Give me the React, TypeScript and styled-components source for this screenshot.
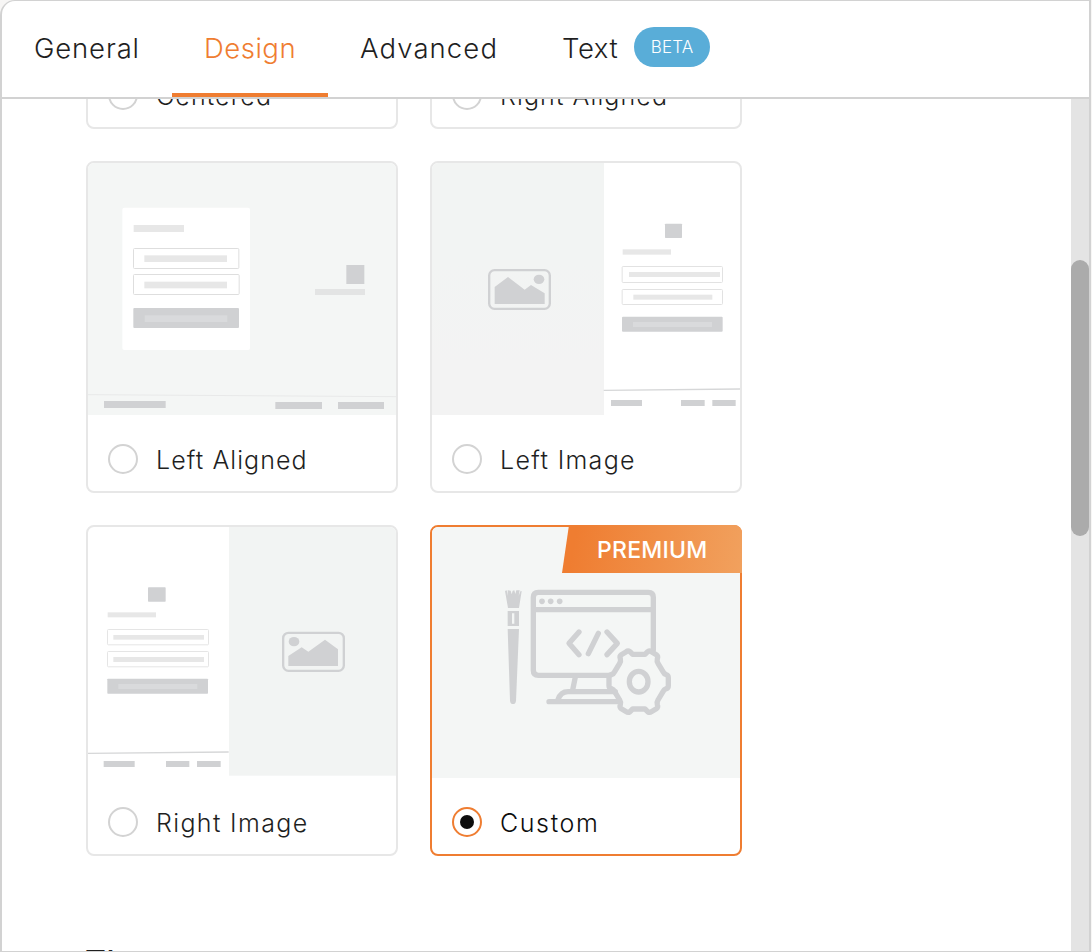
import React from "react";
import styled, { createGlobalStyle } from "styled-components";

const GlobalStyle = createGlobalStyle`
  * { box-sizing: border-box; }
  body { margin: 0; background: #f7f6f5; font-family: Inter, "Liberation Sans", sans-serif; color: #1f1f1f; }
`;

const Panel = styled.main`
  display: flex;
  flex-direction: column;
  width: 1091px;
  height: 952px;
  border: solid #d2d2d2;
  border-width: 1px 2px 1px 2px;
  border-top-left-radius: 15px;
  background: #fff;
  overflow: hidden;
`;

const TabBar = styled.nav`
  display: flex;
  flex: none;
  height: 98px;
  border-bottom: 2px solid #d2d2d2;
`;

const Tab = styled.div<{ $active?: boolean }>`
  display: flex;
  align-items: center;
  gap: 16px;
  padding: 2px 32px 0;
  border-bottom: 4px solid ${(p) => (p.$active ? "#ef7d31" : "transparent")};
  color: ${(p) => (p.$active ? "#ef7d31" : "#1f1f1f")};
`;

const TabLabel = styled.span<{ $width: number; $spacing: number }>`
  width: ${(p) => p.$width}px;
  font-size: 27.5px;
  font-weight: 330;
  line-height: 36px;
  letter-spacing: ${(p) => p.$spacing}px;
  white-space: nowrap;
`;

const Beta = styled.span`
  display: flex;
  align-items: center;
  justify-content: center;
  width: 76px;
  height: 40px;
  margin-top: -3px;
  border-radius: 20px;
  background: #59add8;
  color: #fff;
  font-size: 17px;
  font-weight: 330;
  letter-spacing: 0.1px;
`;

const Body = styled.div`
  display: flex;
  flex: 1;
  min-height: 0;
  overflow: hidden;
`;

const Content = styled.section`
  flex: 1;
  padding-left: 84px;
  overflow: hidden;
`;

const Grid = styled.div`
  display: grid;
  grid-template-columns: 312px 312px;
  grid-template-rows: 332px 332px 331px;
  gap: 32px;
  margin-top: -302px;
`;

const Card = styled.label<{ $selected?: boolean }>`
  position: relative;
  display: flex;
  flex-direction: column;
  border: 2px solid ${(p) => (p.$selected ? "#ef7d31" : "#e7e7e7")};
  border-radius: 8px;
  background: #fff;
  color: ${(p) => (p.$selected ? "#0d0d0d" : "#1f1f1f")};
`;

const Art = styled.svg`
  display: block;
  flex: none;
  width: 308px;
  border-radius: 6px 6px 0 0;
`;

const Choice = styled.div`
  display: flex;
  align-items: center;
  gap: 18px;
  height: 30px;
  margin: auto 20px 17px;
`;

const Radio = styled.span<{ $selected?: boolean }>`
  display: flex;
  align-items: center;
  justify-content: center;
  width: 30px;
  height: 30px;
  border: 2px solid ${(p) => (p.$selected ? "#ef7d31" : "#d3d3d3")};
  border-radius: 50%;

  &::after {
    content: "";
    width: 14px;
    height: 14px;
    border-radius: 50%;
    background: ${(p) => (p.$selected ? "#0d0d0d" : "transparent")};
  }
`;

const Name = styled.span<{ $spacing: number }>`
  padding-top: 2px;
  font-size: 25px;
  font-weight: 330;
  line-height: 30px;
  letter-spacing: ${(p) => p.$spacing}px;
  white-space: nowrap;
`;

const Ribbon = styled.span`
  position: absolute;
  top: -2px;
  right: -2px;
  width: 180px;
  height: 48px;
  padding-left: 35px;
  border-top-right-radius: 8px;
  background: linear-gradient(100deg, #ef7d31 8%, #f1a15e 100%);
  clip-path: polygon(7px 0, 100% 0, 100% 100%, 0 100%);
  color: #fff;
  font-size: 23px;
  font-weight: 450;
  line-height: 50px;
  letter-spacing: 0.25px;
`;

const Heading = styled.h2`
  margin: 87px 0 0 -1px;
  font-size: 32px;
  font-weight: 450;
  line-height: 40px;
  letter-spacing: 0.6px;
`;

const Track = styled.div`
  flex: none;
  width: 18px;
  padding-top: 161px;
  background: #e4e4e4;
`;

const Thumb = styled.div`
  height: 276px;
  border-radius: 9px;
  background: #ababab;
`;

const DARK = "#d0d1d3";
const LIGHT = "#e7e7e7";

const LeftAlignedArt = () => (
  <Art viewBox="24 24 924 756" height={252}>
    <rect x="24" y="24" width="924" height="756" fill="#f4f6f5" />
    <rect x="127" y="158" width="383" height="427" rx="6" fill="#fff" />
    <rect x="161" y="210" width="151" height="21" fill={LIGHT} />
    <g fill="none" stroke="#dedede" strokeWidth="3">
      <rect x="160.500" y="280.500" width="316" height="60" rx="3" />
      <rect x="160.500" y="358.500" width="317" height="60" rx="3" />
    </g>
    <rect x="193" y="301" width="248" height="20" fill={LIGHT} />
    <rect x="193" y="380" width="248" height="20" fill={LIGHT} />
    <rect x="160" y="459" width="317" height="60" rx="3" fill={DARK} />
    <rect x="194" y="481" width="248" height="20" fill="#d9dadc" />
    <rect x="799" y="330" width="54" height="57" fill={DARK} />
    <rect x="705" y="402" width="150" height="18" fill="#e3e4e4" />
    <path d="M24 719L948 725" stroke="#e8e9e9" strokeWidth="3" />
    <g fill={DARK}>
      <rect x="72" y="738" width="185" height="21" />
      <rect x="586" y="741" width="140" height="21" />
      <rect x="774" y="741" width="138" height="21" />
    </g>
  </Art>
);

const LeftImageArt = () => (
  <Art viewBox="21 24 924 756" height={252}>
    <defs>
      <linearGradient id="fade" x1="0" y1="0" x2="0" y2="1">
        <stop offset="0.4" stopColor="#f2f4f3" />
        <stop offset="0.8" stopColor="#f3f3f3" />
      </linearGradient>
    </defs>
    <rect x="21" y="24" width="516" height="756" fill="url(#fade)" />
    <rect x="192.500" y="345.500" width="182" height="116" rx="16" fill="none" stroke={DARK} strokeWidth="7" />
    <path d="M209 396L249 366L299 404L318 390L359 415V447H209Z" fill={DARK} />
    <ellipse cx="342" cy="373" rx="16" ry="14" fill={DARK} />
    <rect x="720" y="206" width="51" height="43" rx="2" fill={DARK} />
    <rect x="593" y="283" width="145" height="16" fill={LIGHT} />
    <g fill="none" stroke="#e2e2e2" strokeWidth="3">
      <rect x="591.500" y="334.500" width="301" height="48" rx="3" />
      <rect x="591.500" y="403.500" width="301" height="45" rx="3" />
    </g>
    <rect x="612" y="351" width="273" height="15" fill={LIGHT} />
    <rect x="625" y="419" width="237" height="15" fill={LIGHT} />
    <rect x="591" y="485" width="302" height="45" rx="3" fill={DARK} />
    <rect x="624" y="501" width="237" height="15" fill="#d9dadc" />
    <path d="M536 706L946 702" stroke="#d6d7d8" strokeWidth="4" />
    <g fill={DARK}>
      <rect x="558" y="735" width="93" height="18" />
      <rect x="768" y="735" width="71" height="18" />
      <rect x="862" y="735" width="70" height="18" />
    </g>
  </Art>
);

const RightImageArt = () => (
  <Art viewBox="24 21 924 756" height={252}>
    <rect x="447" y="21" width="501" height="746" fill="#f2f4f3" />
    <rect x="609.500" y="338.500" width="182" height="114" rx="16" fill="none" stroke={DARK} strokeWidth="7" />
    <path d="M625 408L665 382L685 395L735 359L774 388V438H625Z" fill={DARK} />
    <ellipse cx="642" cy="365" rx="16" ry="14" fill={DARK} />
    <rect x="204" y="202" width="53" height="43" rx="2" fill={DARK} />
    <rect x="83" y="277" width="145" height="15" fill={LIGHT} />
    <g fill="none" stroke="#e5e5e5" strokeWidth="3">
      <rect x="82.500" y="328.500" width="303" height="46" rx="3" />
      <rect x="82.500" y="394.500" width="303" height="46" rx="3" />
    </g>
    <rect x="100" y="345" width="272" height="14" fill={LIGHT} />
    <rect x="100" y="411" width="272" height="15" fill={LIGHT} />
    <rect x="82" y="476" width="302" height="45" rx="2" fill={DARK} />
    <rect x="115" y="492" width="237" height="15" fill="#d9dadc" />
    <path d="M24 700L446 696" stroke="#d6d7d8" strokeWidth="4" />
    <g fill={DARK}>
      <rect x="71" y="723" width="93" height="18" />
      <rect x="258" y="723" width="70" height="18" />
      <rect x="351" y="723" width="71" height="18" />
    </g>
  </Art>
);

const CustomArt = () => (
  <Art viewBox="0 0 924 753" height={251}>
    <rect width="924" height="753" fill="#f4f6f5" />
    <g transform="translate(174 144)">
      <path d="M45 48L50 46L54 62L53 46L62 47L65 58L68 47L73 46L76 57L79 46L89 46L86 62L92 47L95 49L87 99H54Z" fill={DARK} />
      <path d="M53 108H87V153H53ZM66 115V146H73V115Z" fill={DARK} fillRule="evenodd" />
      <path d="M53 162H87L78 377Q77 387 69 387Q61 387 60 377Z" fill={DARK} />
      <g fill="none" stroke={DARK} strokeWidth="16" strokeLinecap="round" strokeLinejoin="round">
        <path d="M490 225V67Q490 52 475 52H145Q130 52 130 67V286Q130 301 145 301H358M130 104H490" />
        <path d="M267 171L237 205L267 239M325 175L295 236M351 171L382 205L351 239" />
        <path d="M256 306L248 345M204 374Q212 350 234 350H376M177 380H388" />
        <path d="M428 238H465L473 230Q479 226 484 230L499 239Q505 243 502 251Q500 259 504 265L519 290Q522 297 529 299Q535 301 535 308V332Q535 339 529 341Q522 343 519 350L504 375Q500 381 502 389Q505 397 499 401L484 410Q479 414 473 410L465 402H428L420 410Q414 414 409 410L394 401Q388 397 391 389Q393 381 389 375L374 350Q371 343 364 341Q357 339 357 332V308Q357 301 364 299Q371 297 374 290L389 265Q393 259 391 251Q388 243 394 239L409 230Q414 226 420 230Z" />
        <ellipse cx="446" cy="320" rx="28" ry="31" />
      </g>
      <g fill={DARK}>
        <circle cx="156" cy="79" r="8.500" />
        <circle cx="182" cy="79" r="8.500" />
        <circle cx="209" cy="79" r="8.500" />
      </g>
    </g>
  </Art>
);

const layouts = [
  { name: "Centered", spacing: 1.1 },
  { name: "Right Aligned", spacing: 1.1 },
  { name: "Left Aligned", spacing: 1.05, art: <LeftAlignedArt /> },
  { name: "Left Image", spacing: 1.3, art: <LeftImageArt /> },
  { name: "Right Image", spacing: 1.35, art: <RightImageArt /> },
  { name: "Custom", spacing: 1.6, art: <CustomArt />, selected: true },
];

export default function App() {
  return (
    <>
      <GlobalStyle />
      <Panel>
        <TabBar>
          <Tab><TabLabel $width={106} $spacing={0.85}>General</TabLabel></Tab>
          <Tab $active><TabLabel $width={92} $spacing={0.5}>Design</TabLabel></Tab>
          <Tab><TabLabel $width={138} $spacing={1.1}>Advanced</TabLabel></Tab>
          <Tab><TabLabel $width={56} $spacing={0.6}>Text</TabLabel><Beta>BETA</Beta></Tab>
        </TabBar>
        <Body>
          <Content>
            <Grid>
              {layouts.map((l) => (
                <Card key={l.name} $selected={l.selected}>
                  {l.art}
                  {l.selected && <Ribbon>PREMIUM</Ribbon>}
                  <Choice>
                    <Radio $selected={l.selected} />
                    <Name $spacing={l.spacing}>{l.name}</Name>
                  </Choice>
                </Card>
              ))}
            </Grid>
            <Heading>Themes</Heading>
          </Content>
          <Track><Thumb /></Track>
        </Body>
      </Panel>
    </>
  );
}
